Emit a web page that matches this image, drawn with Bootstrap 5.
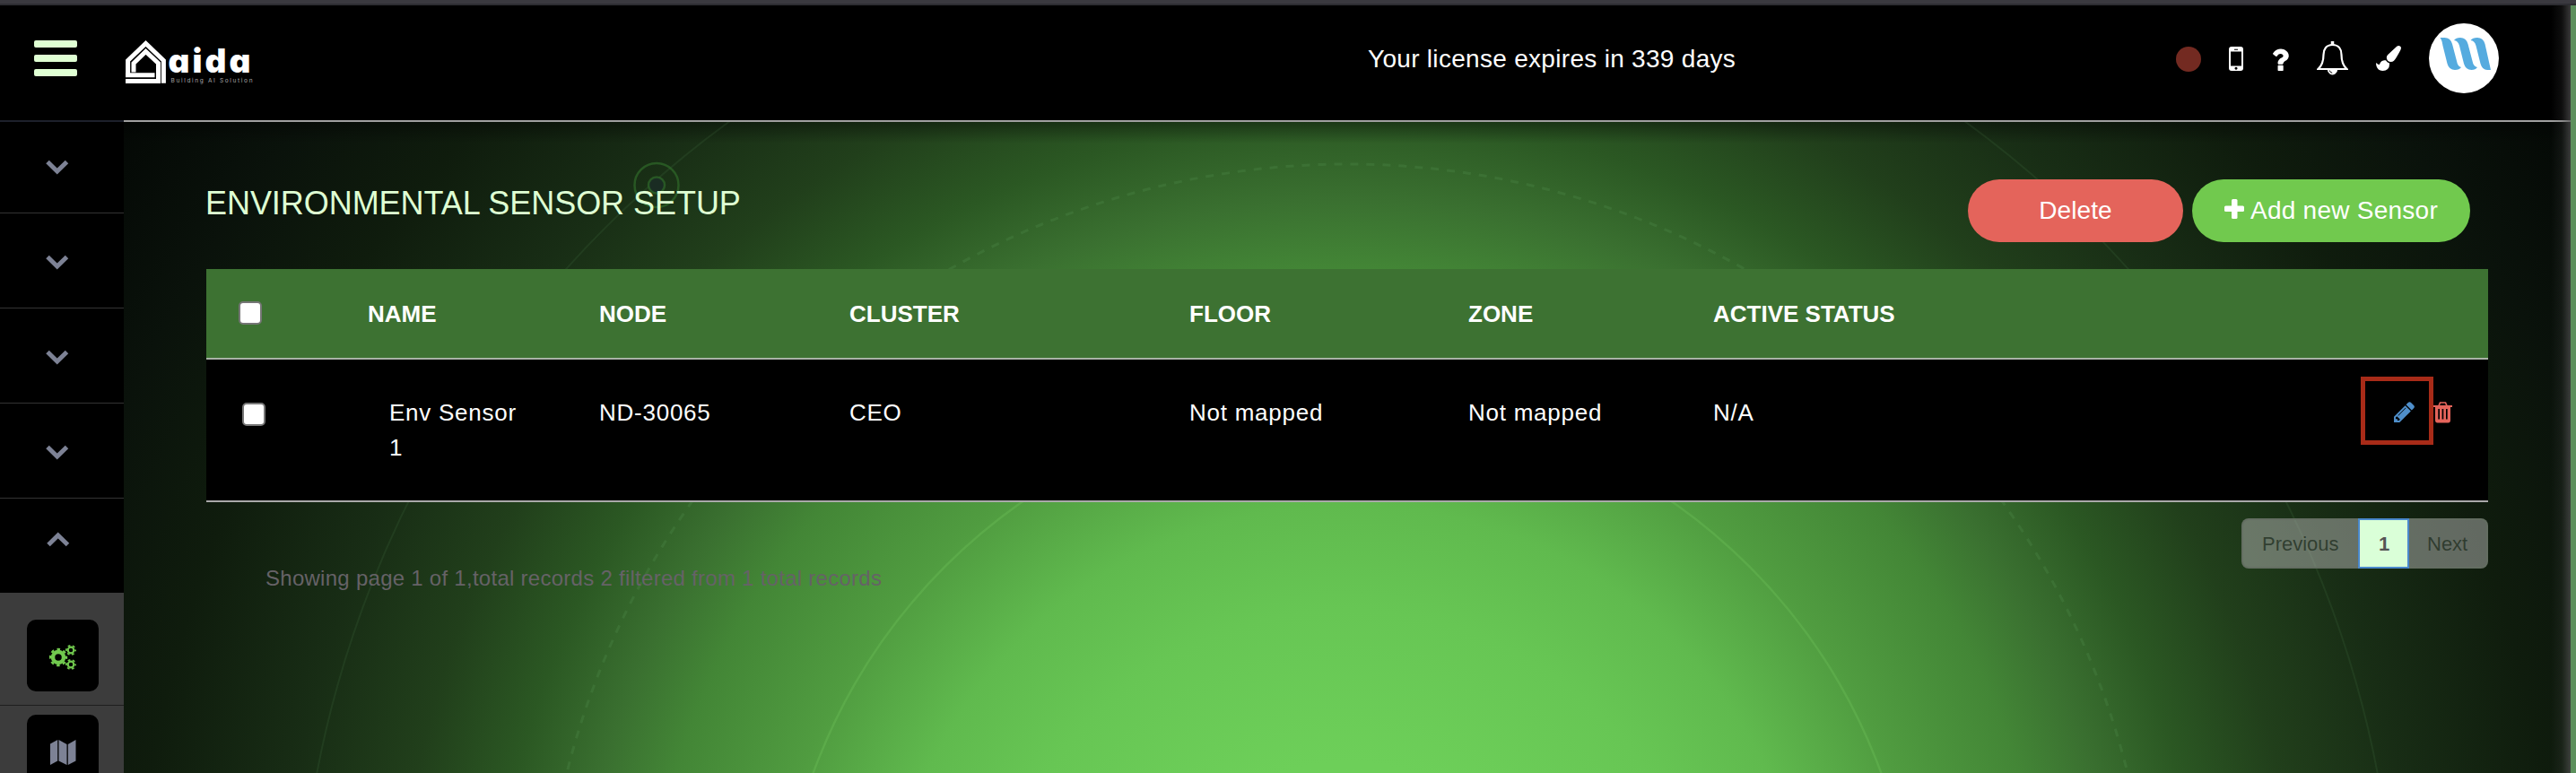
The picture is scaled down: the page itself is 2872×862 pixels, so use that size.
<!DOCTYPE html>
<html lang="en">
<head>
<meta charset="utf-8">
<title>Environmental Sensor Setup</title>
<link rel="stylesheet" href="https://cdn.jsdelivr.net/npm/bootstrap@5.3.0/dist/css/bootstrap.min.css">
<style>
body{font-family:"Liberation Sans",Arial,sans-serif;background:#3a393f;height:862px;overflow:hidden;color:#fff}
svg{display:block;flex:none}
.window{margin-top:4px;border-top:2px solid #2d2d32;height:858px;background:#5c8f5c}
.app{width:2866px;height:856px;background:#000}
.edge{position:absolute;top:0;right:0;bottom:0;width:22px;background:linear-gradient(90deg,rgba(70,70,70,0),rgba(70,70,70,.2) 55%,rgba(80,80,80,.7));z-index:3}
.topbar{height:130px;padding:0 80px 12px 38px;background:linear-gradient(#a0a0a0,#a0a0a0) 138px 128px/2728px 2px no-repeat,linear-gradient(#1d202b,#1d202b) 0 128px/138px 2px no-repeat,#000}
.brand-logo{margin-left:52px}
.license{margin-left:1237px;font-size:28px;letter-spacing:.3px;line-height:42px;white-space:nowrap;margin-top:2px}
.tools{gap:31px}
.dot{width:28px;height:28px;border-radius:50%;background:#732a21;margin-top:2px}
.avatar{width:78px;height:78px;border-radius:50%;background:#fff;overflow:hidden}
.side{width:138px;background:#000}
.side-item{height:106px;border-bottom:1px solid #333;padding:46px 0 0 51px}
.side-item:first-child{height:102px;padding-top:42px}
.side-item.up{height:105px;border:0;padding-top:37px;padding-left:52px}
.sub{background:#3c3c3c;height:201px;padding-top:30px}
.sub-item{height:96px;border-bottom:1px solid #1e1e1e;padding-left:30px}
.tile{width:80px;height:80px;border-radius:10px;background:#000}
.main{width:2728px;height:726px;overflow:hidden;padding:0 92px;background:radial-gradient(circle at 1364px 944px,#6dd05a 0,#6dcf59 230px,#67c654 400px,#60ba4e 517px,#509c40 645px,#438636 780px,#3a7030 857px,#2b5823 950px,#213f1b 1060px,#182d15 1190px,#0f1c0d 1350px,#0a120b 1500px,#040805 1660px)}
.main::before{content:"";position:absolute;left:0;right:0;top:0;height:24px;background:linear-gradient(rgba(0,0,0,.38),rgba(0,0,0,0))}
.rings{position:absolute;left:0;top:0}
.content{position:relative}
.head-row{height:164px;padding:64px 20px 0 0}
.title{font-size:36px;line-height:43px;color:#dfffd3;margin:5px 0 0 -1px;letter-spacing:-.05px}
.pill{height:70px;border-radius:35px;border:0;font-size:28px;line-height:42px;color:#fff;letter-spacing:.1px;padding:0}
.pill-del{width:240px;background:#e4645b;margin-right:10px}
.pill-add{width:310px;background:#71c94e;letter-spacing:.25px}
.sensors{width:2544px;table-layout:fixed;margin:0;font-size:26px;line-height:39px;border-collapse:separate;border-spacing:0}
.sensors th{height:101px;padding:31px 0 0;background:#3d7232;border-bottom:2px solid #a9b3a7;vertical-align:top;color:#fff}
.sensors td{height:159px;padding:40px 0 0;background:#000;border-bottom:2px solid #a9a9a9;vertical-align:top;color:#fff;letter-spacing:.75px}
.sensors td.name{padding:40px 80px 0 24px}
.cbx{display:block;width:26px;height:26px;background:#fff;border:2px solid #767676;border-radius:5px;margin:5px 0 0 36px}
td .cbx{margin:8px 0 0 40px}
.edit{width:81px;height:76px;border:5px solid #a82b18;margin-top:-21px;padding:23px 0 0 32px}
.foot-note{font-size:24px;line-height:36px;letter-spacing:.27px;color:#666267;margin:67px 0 0 66px;white-space:nowrap}
.pager{margin:18px 0 0;height:56px;font-size:22px;line-height:33px}
.pager .page-link{height:56px;border:2px solid rgba(100,110,98,.9);border-width:2px 0;background:rgba(190,190,190,.48);color:rgba(30,45,30,.75);padding:10px 0 0 22px;font-size:22px}
.pager li:first-child .page-link{width:130px;border-left-width:2px;border-radius:8px 0 0 8px;padding-left:21px}
.pager li:last-child .page-link{width:88px;border-right-width:2px;border-radius:0 8px 8px 0;padding-left:20px;margin:0}
.pager li.active .page-link{width:57px;border:2px solid #4a88cc;background:#daffd8;color:#555;font-weight:700;padding-left:21px;margin:0}
</style>
</head>
<body>
<div class="window position-relative">
<div class="app position-relative">
  <div class="edge"></div>
  <header class="topbar d-flex align-items-center">
    <svg width="48" height="40" fill="#dfffd3"><rect width="48" height="8" rx="2"/><rect y="16" width="48" height="8" rx="2"/><rect y="32" width="48" height="8" rx="2"/></svg>
    <svg class="brand-logo" width="150" height="60" viewBox="138 35 150 60">
      <g fill="none" stroke="#fff" stroke-width="5">
        <path d="M142.600 86V67.500L162.500 48.500L182.400 67.500V92.700"/>
        <path d="M149 80.500V70.500L162.500 57.500L176.500 70.500V90.500"/>
        <path d="M140 83.700H172.500M140 90.500H179"/>
      </g>
      <text x="187.500" y="81" textLength="92" lengthAdjust="spacing" font-family="Inter" font-weight="900" font-size="37" fill="#fff" style="font-feature-settings:'cv11'">aida</text>
      <text x="190.500" y="92" textLength="91" lengthAdjust="spacing" font-family="Inter" font-size="6.500" fill="#aaa">Building AI Solution</text>
    </svg>
    <div class="license">Your license expires in 339 days</div>
    <div class="tools d-flex align-items-center ms-auto">
      <span class="dot"></span>
      <svg width="16" height="27" fill-rule="evenodd" fill="#fff"><path d="M3 0h10a3 3 0 0 1 3 3v21a3 3 0 0 1-3 3H3a3 3 0 0 1-3-3V3a3 3 0 0 1 3-3zM2 5.500v16h12v-16zM6 2.800v1h4v-1zM8 22.800a1.500 1.500 0 1 0 .01 0z"/></svg>
      <svg width="20" height="27" viewBox="388 128 1016 1408" fill="#fff"><path d="M1088 1256v240q0 16-12 28t-28 12h-240q-16 0-28-12t-12-28v-240q0-16 12-28t28-12h240q16 0 28 12t12 28zm316-600q0 54-15.500 101t-35 76.500-55 59.500-57.500 43.500-61 35.500q-41 23-68.500 65t-27.500 67q0 17-12 32.500t-28 15.500h-240q-15 0-25.500-18.500t-10.500-37.500v-45q0-83 65-156.500t143-108.500q59-27 84-56t25-76q0-42-46.500-74t-107.500-32q-65 0-108 29-35 25-107 115-13 16-31 16-12 0-25-8l-164-125q-13-10-15.500-25t5.500-28q160-266 464-266 80 0 161 31t146 83 106 127.500 41 158.500z"/></svg>
      <svg width="35" height="38" fill="none" stroke="#fff" stroke-width="2.200"><path d="M17.500 4C10.500 4 7.500 9 7.500 15C7.500 22 6.500 26.500 1.500 31H33.500C28.500 26.500 27.500 22 27.500 15C27.500 9 24.500 4 17.500 4Z"/><path d="M17.500 0v4" stroke-width="3.500"/><path d="M12.500 32a5 5 0 0 0 10 0z" fill="#fff" stroke-width="1"/><path d="M14.200 32.500a3.500 3.500 0 0 0 3 2.700" stroke="#000" stroke-width="1"/></svg>
      <svg width="28" height="28" viewBox="0 0 1792 1792" fill="#fff"><path d="M1615 0q70 0 122.500 46.500t52.500 116.500q0 63-45 151-332 629-465 752-97 91-218 91-126 0-216.500-92.500t-90.500-219.500q0-128 92-212l638-579q59-54 130-54zm-909 1034q39 76 106.500 130t150.500 76l1 71q4 213-129.500 347t-348.500 134q-123 0-218-46.500t-152.500-127.500-86.500-183-29-220q7 5 41 30t62 44.500 59 36.500 46 17q41 0 55-37 25-66 57.500-112.500t69.500-76 88-47.500 103-25.500 125-10.500z"/></svg>
      <span class="avatar"><svg width="78" height="78" fill="#55abdf"><path d="M12.500 16H17.500Q24 16 26 23L31 42Q32 48 36 49Q34 52 29 52Q22.500 52 20.500 45L15.500 25Q14.500 18.500 12.500 16Z"/><path d="M28 19Q30 16 35 16Q41.500 16 43.500 23L48.500 42Q49.500 48 54 49Q52 52 47.500 52Q41 52 39 45L34 25Q32.500 19.500 28 19Z"/><path d="M46.500 19Q48.500 16 54 16Q60.500 16 62.500 23L69 52H65Q59.500 52 57.500 45L52.500 25Q51 19.500 46.500 19Z"/></svg></span>
    </div>
  </header>
  <div class="d-flex">
    <nav class="side">
      <div class="side-item"><svg width="26" height="17" fill="none" stroke="#7d8295" stroke-width="5"><path d="M2 2.500L12.700 13L23.500 2.500"/></svg></div>
      <div class="side-item"><svg width="26" height="17" fill="none" stroke="#7d8295" stroke-width="5"><path d="M2 2.500L12.700 13L23.500 2.500"/></svg></div>
      <div class="side-item"><svg width="26" height="17" fill="none" stroke="#7d8295" stroke-width="5"><path d="M2 2.500L12.700 13L23.500 2.500"/></svg></div>
      <div class="side-item"><svg width="26" height="17" fill="none" stroke="#7d8295" stroke-width="5"><path d="M2 2.500L12.700 13L23.500 2.500"/></svg></div>
      <div class="side-item up"><svg width="26" height="17" fill="none" stroke="#7d8295" stroke-width="5"><path d="M2 14.500L12.700 4L23.500 14.500"/></svg></div>
      <div class="sub">
        <div class="sub-item"><div class="tile d-flex align-items-center justify-content-center">
          <svg class="mt-1" width="30" height="28" fill="none" stroke="#71c94e"><circle cx="10" cy="14" r="6" stroke-width="4.500"/><circle cx="10" cy="14" r="9" stroke-width="2.400" stroke-dasharray="3.534 3.534" stroke-dashoffset="1.767"/><circle cx="24" cy="6" r="3.300" stroke-width="2.200"/><circle cx="24" cy="6" r="5.100" stroke-width="1.800" stroke-dasharray="2.670 2.670" stroke-dashoffset="1.330"/><circle cx="24" cy="22" r="3.300" stroke-width="2.200"/><circle cx="24" cy="22" r="5.100" stroke-width="1.800" stroke-dasharray="2.670 2.670" stroke-dashoffset="1.330"/></svg>
        </div></div>
        <div class="sub-item" style="padding-top:10px"><div class="tile d-flex align-items-center justify-content-center">
          <svg class="mt-1" width="30" height="28" fill="#7d8295"><path d="M1 4.500L9.200 0V23.500L1 28ZM10.500 0L19.500 5V28L10.500 23.500ZM20.800 5L29.500 0V23.500L20.800 28Z"/></svg>
        </div></div>
      </div>
    </nav>
    <main class="main position-relative">
      <svg class="rings" width="2728" height="726" fill="none"><circle cx="1364" cy="944" r="634" stroke="#7fd46a" stroke-opacity=".22" stroke-width="2.500"/><circle cx="1364" cy="944" r="897" stroke="#6fb873" stroke-opacity=".14" stroke-width="3" stroke-dasharray="9 9"/><circle cx="1364" cy="944" r="1169" stroke="#5f9f60" stroke-opacity=".12" stroke-width="2"/><g stroke="#2f6a2a" stroke-width="2.500" stroke-opacity=".7"><circle cx="594" cy="70.500" r="24.500"/><circle cx="594" cy="70.500" r="9" fill="#1a2c23"/></g></svg>
      <div class="content">
        <div class="head-row d-flex justify-content-between align-items-start">
          <h1 class="title fw-normal">ENVIRONMENTAL SENSOR SETUP</h1>
          <div class="d-flex">
            <button class="btn pill pill-del">Delete</button>
            <button class="btn pill pill-add d-flex align-items-center justify-content-center"><svg width="22" height="22" fill="#fff" style="margin:-5px 7px 0 0"><rect x="8" width="6.500" height="22" rx="1.500"/><rect y="7.500" width="22" height="6.500" rx="1.500"/></svg>Add new Sensor</button>
          </div>
        </div>
        <table class="sensors">
          <colgroup><col style="width:180px"><col style="width:258px"><col style="width:279px"><col style="width:379px"><col style="width:311px"><col style="width:273px"><col style="width:864px"></colgroup>
          <thead><tr><th><span class="cbx"></span></th><th>NAME</th><th>NODE</th><th>CLUSTER</th><th>FLOOR</th><th>ZONE</th><th>ACTIVE STATUS</th></tr></thead>
          <tbody><tr><td><span class="cbx"></span></td><td class="name">Env Sensor 1</td><td>ND-30065</td><td>CEO</td><td>Not mapped</td><td>Not mapped</td>
            <td><div class="d-flex align-items-start"><span>N/A</span>
              <div class="d-flex ms-auto" style="margin-right:40px"><span class="edit"><svg width="23" height="23" viewBox="128 140 1520 1524" fill="#4f8fcb"><path d="M491 1536l91-91-235-235-91 91v107h128v128h107zm523-928q0-22-22-22-10 0-17 7l-542 542q-7 7-7 17 0 22 22 22 10 0 17-7l542-542q7-7 7-17zm-54-192l416 416-832 832h-416v-416zm683 96q0 53-37 90l-166 166-416-416 166-165q36-38 90-38 53 0 91 38l235 234q37 39 37 91z"/></svg></span>
              <svg width="21" height="24" style="margin-top:7px" fill="#e4645b" fill-rule="evenodd"><path d="M2 5.500H19V20.500Q19 23.500 16.500 23.500H4.500Q2 23.500 2 20.500ZM5.300 8V19.500H7V8ZM9.600 8V19.500H11.300V8ZM14 8V19.500H15.700V8Z"/><path d="M0 4H21V6H0Z"/><path d="M6 4.500L7.500 1H13.500L15 4.500" fill="none" stroke="#e4645b" stroke-width="1.700"/></svg></div></div></td></tr></tbody>
        </table>
        <div class="d-flex justify-content-between align-items-start">
          <p class="foot-note">Showing page 1 of 1,total records 2 filtered from 1 total records</p>
          <ul class="pagination pager"><li class="page-item"><span class="page-link">Previous</span></li><li class="page-item active"><span class="page-link">1</span></li><li class="page-item"><span class="page-link">Next</span></li></ul>
        </div>
      </div>
    </main>
  </div>
</div>
</div>
<script src="https://cdn.jsdelivr.net/npm/bootstrap@5.3.0/dist/js/bootstrap.bundle.min.js"></script>
</body>
</html>
